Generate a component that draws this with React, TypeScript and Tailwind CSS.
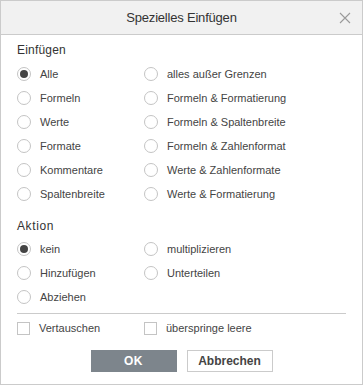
import React, { useState } from 'react';

const pasteOptions: [string, string][] = [
  ['Alle', 'alles außer Grenzen'],
  ['Formeln', 'Formeln & Formatierung'],
  ['Werte', 'Formeln & Spaltenbreite'],
  ['Formate', 'Formeln & Zahlenformat'],
  ['Kommentare', 'Werte & Zahlenformate'],
  ['Spaltenbreite', 'Werte & Formatierung'],
];

const actionOptions: [string, string | null][] = [
  ['kein', 'multiplizieren'],
  ['Hinzufügen', 'Unterteilen'],
  ['Abziehen', null],
];

function Radio({ label, checked, onClick }: { label: string; checked: boolean; onClick: () => void }) {
  return (
    <div className="h-[24px] flex items-center gap-[9px] cursor-pointer" onClick={onClick}>
      <span className="w-[14px] h-[14px] rounded-full border border-[#c4c4c4] bg-white flex items-center justify-center shrink-0">
        {checked && <span className="w-[8px] h-[8px] rounded-full bg-[#444]" />}
      </span>
      <span className="text-[11px] leading-none">{label}</span>
    </div>
  );
}

function Checkbox({ label }: { label: string }) {
  const [on, setOn] = useState(false);
  return (
    <div className="h-[24px] flex items-center gap-[9px] cursor-pointer" onClick={() => setOn(v => !v)}>
      <span className="w-[13px] h-[13px] border border-[#c4c4c4] bg-white flex items-center justify-center shrink-0">
        {on && <span className="text-[10px] leading-none">✓</span>}
      </span>
      <span className="text-[11px] leading-none">{label}</span>
    </div>
  );
}

export default function App() {
  const [paste, setPaste] = useState('Alle');
  const [action, setAction] = useState('kein');

  return (
    <div className="w-[363px] h-[385px] border border-[#cbcbcb] bg-white flex flex-col text-[#444] font-['Liberation_Sans',Arial,sans-serif]">
      {/* Titelleiste */}
      <div className="h-[34px] shrink-0 bg-[#f1f1f1] border-b border-[#cbcbcb] flex items-center justify-center relative">
        <span className="text-[13px] tracking-[-0.2px] text-[#333]">Spezielles Einfügen</span>
        <button className="absolute right-[11px] top-[11px] w-[12px] h-[12px] flex items-center justify-center">
          <svg width="12" height="12" viewBox="0 0 12 12">
            <path d="M1 1 L11 11 M11 1 L1 11" stroke="#9a9a9a" strokeWidth="1.1" />
          </svg>
        </button>
      </div>

      <div className="px-[16px] pt-[7px] flex flex-col">
        <div className="h-[16px] leading-[16px] text-[12px] text-[#333] tracking-[0.2px]">Einfügen</div>
        <div className="mt-[4px] grid grid-cols-[127px_1fr]">
          {pasteOptions.map(([a, b]) => (
            <React.Fragment key={a}>
              <Radio label={a} checked={paste === a} onClick={() => setPaste(a)} />
              <Radio label={b} checked={paste === b} onClick={() => setPaste(b)} />
            </React.Fragment>
          ))}
        </div>

        <div className="mt-[12px] h-[16px] leading-[16px] text-[12px] text-[#333] tracking-[0.6px]">Aktion</div>
        <div className="mt-[3px] grid grid-cols-[127px_1fr]">
          {actionOptions.map(([a, b]) => (
            <React.Fragment key={a}>
              <Radio label={a} checked={action === a} onClick={() => setAction(a)} />
              {b ? <Radio label={b} checked={action === b} onClick={() => setAction(b)} /> : <div />}
            </React.Fragment>
          ))}
        </div>

        <div className="mt-[4px] h-px bg-[#cbcbcb]" />

        <div className="mt-[2px] grid grid-cols-[127px_1fr]">
          <Checkbox label="Vertauschen" />
          <Checkbox label="überspringe leere" />
        </div>

        <div className="mt-[10px] flex justify-center gap-[10px]">
          <button className="w-[86px] h-[22px] bg-[#7d858c] text-white text-[12px] font-bold tracking-[0.5px]">OK</button>
          <button className="w-[86px] h-[22px] bg-white border border-[#cbcbcb] text-[#444] text-[12px] font-bold">Abbrechen</button>
        </div>
      </div>
    </div>
  );
}
